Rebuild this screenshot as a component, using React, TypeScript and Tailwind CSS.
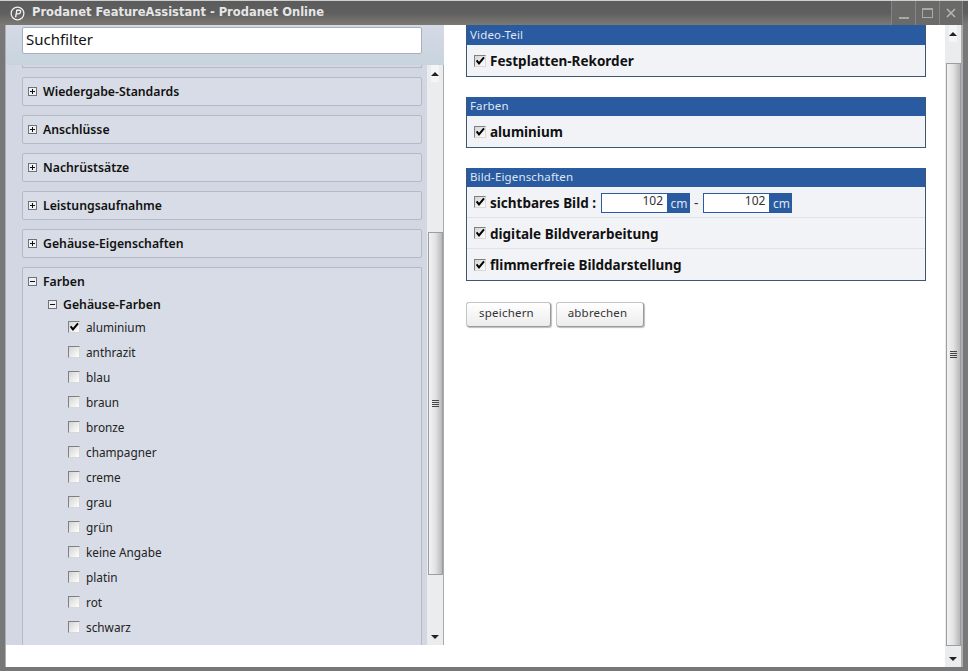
import React from "react";

const Check = ({ on = true }: { on?: boolean }) => (
  <span className="relative -mt-[2px] inline-block w-[12px] h-[12px] shrink-0 border border-[#808080] border-r-[#d8d8d8] border-b-[#d8d8d8] bg-gradient-to-br from-[#d4d4d4] to-white">
    {on && (
      <svg viewBox="0 0 12 12" className="absolute -left-px -top-px w-[12px] h-[12px]">
        <path d="M2.6 5.4 L5 8.4 L10 2.4" fill="none" stroke="#000" strokeWidth="2" />
      </svg>
    )}
  </span>
);

const Tree = ({ open = false }: { open?: boolean }) => (
  <svg viewBox="0 0 9 9" className="w-[9px] h-[9px] shrink-0">
    <rect x="0.5" y="0.5" width="8" height="8" fill="#eef0f4" stroke="#6f7278" />
    <path d={open ? "M2 4.5H7" : "M2 4.5H7M4.5 2V7"} stroke="#111" fill="none" />
  </svg>
);

const Closed = ({ label }: { label: string }) => (
  <div className="h-[29px] mb-[9px] flex items-center pl-[5px] gap-[6px] border border-[#b4b9c4] rounded-[2px] bg-[#d8dce6] text-[12.25px] font-semibold text-[#111]">
    <Tree />
    <span className="mt-[2px]">{label}</span>
  </div>
);

const Head = ({ label, h = "h-[19px] leading-[18px]" }: { label: string; h?: string }) => (
  <div className={`${h} bg-[#2a5aa0] text-[#dfe7f3] text-[11.5px] pl-[3px] tracking-[0.15px]`}>{label}</div>
);

const colors = ["aluminium", "anthrazit", "blau", "braun", "bronze", "champagner", "creme", "grau", "grün", "keine Angabe", "platin", "rot", "schwarz"];

const Row = ({ children, line = false }: { children: React.ReactNode; line?: boolean }) => (
  <div className={`h-[31px] flex items-center pl-[7px] ${line ? "border-b border-[#dfe2e8]" : ""}`}>
    <div className="mt-[2px] flex items-center gap-[4px] text-[13.5px] font-bold text-[#111]">{children}</div>
  </div>
);

const Cm = ({ w }: { w: string }) => (
  <span className="flex h-[20px] items-stretch font-normal">
    <span className={`${w} bg-white border border-[#2a5aa0] text-right text-[12px] leading-[14px] pr-[4px] text-[#333]`}>102</span>
    <span className="w-[22px] bg-[#2a5aa0] text-[#dfe7f3] text-[12px] leading-[21px] text-center">cm</span>
  </span>
);

const Bar = ({ thumbTop, thumbH }: { thumbTop: string; thumbH: string }) => (
  <div className="w-[17px] h-full shrink-0 flex flex-col items-center bg-[#eaecee] border-r border-[#a8abb0]">
    <div className="h-[17px] flex items-center justify-center shrink-0 bg-[#f4f5f6]">
      <span className="w-0 h-0 border-x-[4px] border-x-transparent border-b-[4px] border-b-[#222]" />
    </div>
    <div className={`${thumbTop} shrink-0`} />
    <div className={`${thumbH} w-[15px] shrink-0 flex flex-col items-center justify-center gap-px border border-[#9a9da2] bg-gradient-to-r from-[#f2f2f2] via-[#e2e2e2] to-[#b8b8b8]`}>
      <span className="w-[7px] h-px bg-[#444]" />
      <span className="w-[7px] h-px bg-[#444]" />
      <span className="w-[7px] h-px bg-[#444]" />
      <span className="w-[7px] h-px bg-[#444]" />
    </div>
    <div className="flex-1" />
    <div className="h-[17px] flex items-center justify-center shrink-0">
      <span className="w-0 h-0 border-x-[4px] border-x-transparent border-t-[4px] border-t-[#222]" />
    </div>
  </div>
);

export default function App() {
  return (
    <div className="w-[968px] h-[671px] flex flex-col overflow-hidden bg-[#787878] text-black [font-family:'Noto_Sans',sans-serif]">
      <div className="h-[25px] shrink-0 flex items-center bg-gradient-to-b from-[#5c5c5c] via-[#5f5f5f] to-[#7c7a74] border-t border-[#cfcfcf] pl-[10px]">
        <svg viewBox="0 0 16 16" className="w-[15px] h-[15px] shrink-0">
          <circle cx="8" cy="8" r="6.8" fill="none" stroke="#f2f2f2" strokeWidth="1.3" />
          <path d="M6 12 L7.3 4.5 H10 Q11.6 4.5 11.2 6.5 Q10.8 8.4 8.8 8.4 H6.9" fill="none" stroke="#f2f2f2" strokeWidth="1.5" />
        </svg>
        <span className="ml-[7px] text-[11.5px] font-bold text-[#e6e6e6] [font-family:'DejaVu_Sans',sans-serif]">Prodanet FeatureAssistant - Prodanet Online</span>
        <div className="ml-auto flex h-full pr-[5px]">
          <div className="w-[24px] flex items-end justify-center pb-[6px] border-l border-[#858585] bg-[#6a6a68]"><span className="w-[10px] h-[2px] bg-[#a9a9a9]" /></div>
          <div className="w-[24px] flex items-center justify-center border-l border-[#858585] bg-[#6a6a68]"><span className="w-[11px] h-[10px] border border-t-2 border-[#a9a9a9]" /></div>
          <div className="w-[24px] flex items-center justify-center border-x border-[#858585] bg-[#6a6a68] text-[#b5b5b5]">
            <svg viewBox="0 0 10 10" className="w-[10px] h-[10px]"><path d="M1 1L9 9M9 1L1 9" stroke="currentColor" strokeWidth="1.6" /></svg>
          </div>
        </div>
      </div>

      <div className="flex-1 min-h-0 mx-[5px] mb-[4px] flex bg-white border-x border-[#aeaeae]">
        <div className="w-[438px] h-full flex flex-col shrink-0">
          <div className="h-[620px] shrink-0 flex flex-col bg-[#d3d7e3]">
            <div className="h-[40px] shrink-0 pl-[16px] pt-[2px] bg-gradient-to-b from-[#d5d9e6] to-[#c8d4dd]">
              <div className="w-[400px] h-[27px] bg-white border border-[#a5b1be] rounded-[2px] pl-[3px] text-[15px] leading-[23px] text-[#111]">Suchfilter</div>
            </div>
            <div className="flex-1 min-h-0 flex">
              <div className="w-[421px] shrink-0 overflow-hidden pl-[16px] pr-[5px]">
                <div className="h-[3px] mb-[9px] border-b border-x border-[#b4b9c4]" />
                <Closed label="Wiedergabe-Standards" />
                <Closed label="Anschlüsse" />
                <Closed label="Nachrüstsätze" />
                <Closed label="Leistungsaufnahme" />
                <Closed label="Gehäuse-Eigenschaften" />
                <div className="border border-b-0 border-[#b4b9c4] rounded-t-[2px] h-[400px] bg-[#d8dce6]">
                  <div className="h-[27px] flex items-center pl-[5px] gap-[6px] text-[12.25px] font-semibold text-[#111]">
                    <Tree open />
                    <span className="mt-[2px]">Farben</span>
                  </div>
                  <div className="h-[19px] flex items-center pl-[25px] gap-[6px] text-[12.25px] font-semibold text-[#111]">
                    <Tree open />
                    <span className="mt-[2px]">Gehäuse-Farben</span>
                  </div>
                  {colors.map((c, i) => (
                    <div key={c} className="h-[25px] pt-[2px] flex items-center pl-[45px] gap-[6px] text-[11.8px] text-[#222]">
                      <Check on={i === 0} />
                      <span>{c}</span>
                    </div>
                  ))}
                </div>
              </div>
              <Bar thumbTop="h-[150px]" thumbH="h-[343px]" />
            </div>
          </div>
        </div>

        <div className="flex-1 min-w-0 pl-[22px] pr-[20px] flex flex-col">
          <section className="w-[460px] mb-[20px] bg-[#f1f3f7] border-x border-b border-[#3d5578]">
            <Head label="Video-Teil" h="h-[20px] leading-[20px]" />
            <Row><Check /><span>Festplatten-Rekorder</span></Row>
          </section>
          <section className="w-[460px] mb-[20px] bg-[#f1f3f7] border-x border-b border-[#3d5578]">
            <Head label="Farben" />
            <Row><Check /><span>aluminium</span></Row>
          </section>
          <section className="w-[460px] mb-[21px] bg-[#f1f3f7] border-x border-b border-[#3d5578]">
            <Head label="Bild-Eigenschaften" />
            <Row line>
              <Check />
              <span className="mr-px">sichtbares Bild :</span>
              <Cm w="w-[67px]" />
              <span className="mr-px font-normal text-[#333]">-</span>
              <Cm w="w-[67px]" />
            </Row>
            <Row line><Check /><span>digitale Bildverarbeitung</span></Row>
            <Row><Check /><span>flimmerfreie Bilddarstellung</span></Row>
          </section>
          <div className="flex gap-[5px]">
            <button className="w-[85px] h-[25px] pr-[4px] pb-[3px] rounded-[3px] border border-[#c4c4c4] border-r-[#9a9a9a] border-b-[#9a9a9a] bg-gradient-to-b from-white to-[#ececec] shadow-[1px_1px_1px_#bdbdbd] text-[11.5px] text-[#333] tracking-[0.2px]">speichern</button>
            <button className="w-[88px] h-[25px] pr-[5px] pb-[3px] rounded-[3px] border border-[#c4c4c4] border-r-[#9a9a9a] border-b-[#9a9a9a] bg-gradient-to-b from-white to-[#ececec] shadow-[1px_1px_1px_#bdbdbd] text-[11.5px] text-[#333] tracking-[0.2px]">abbrechen</button>
          </div>
        </div>
        <Bar thumbTop="h-[21px]" thumbH="h-[583px]" />
      </div>
    </div>
  );
}
